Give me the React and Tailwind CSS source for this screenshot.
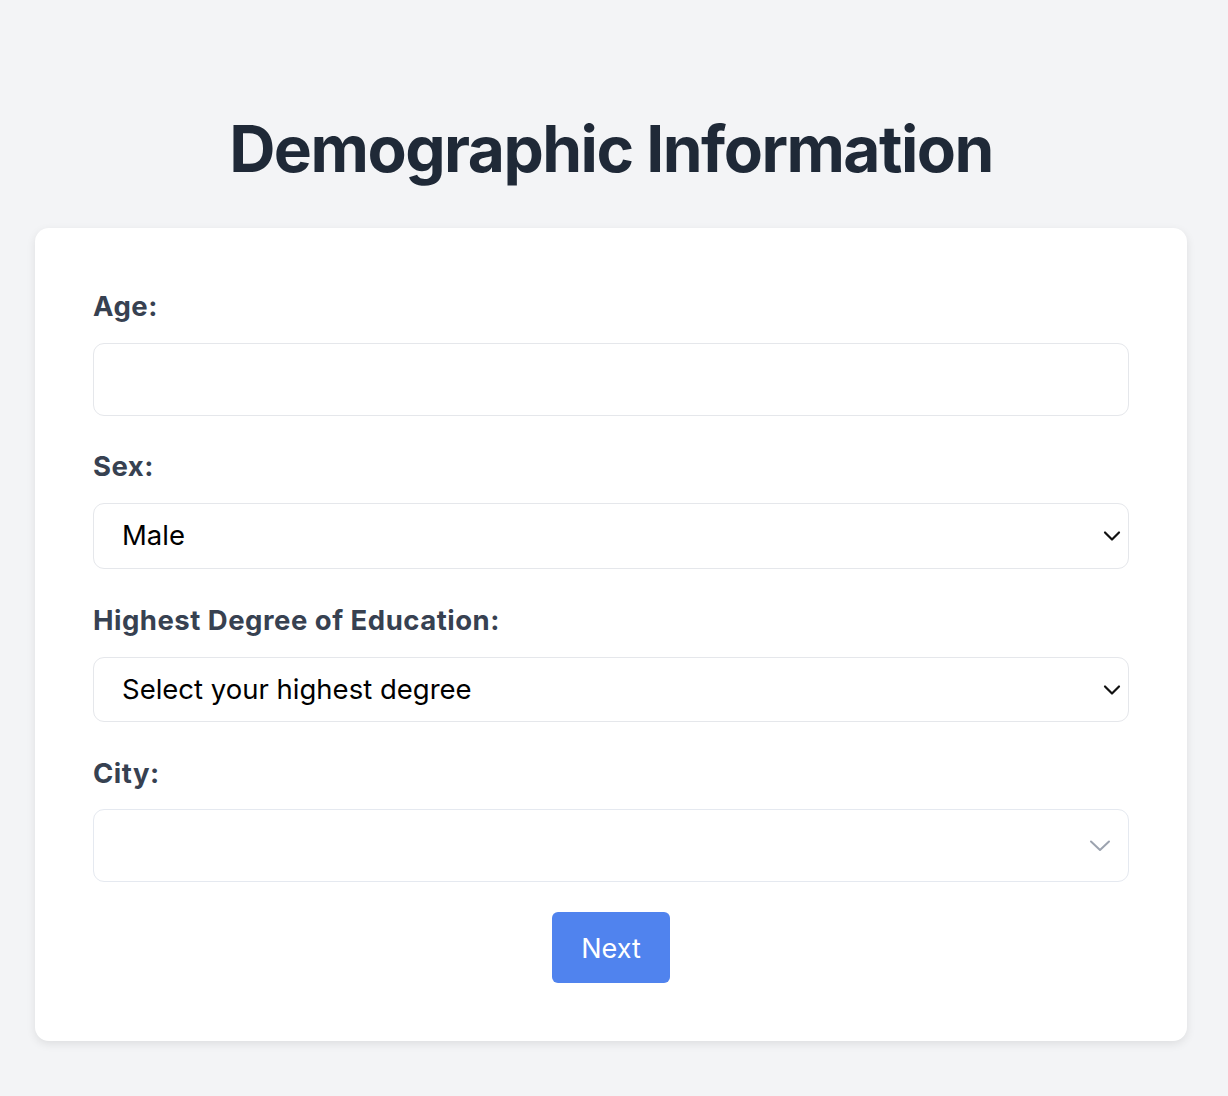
import { useState } from 'react';

// ===== chevrons =====
function SelectChevron() {
  return (
    <svg width="18" height="12" viewBox="0 0 18 12" fill="none" className="absolute right-[8px] top-1/2 -translate-y-1/2 pointer-events-none">
      <path d="M2 2.5 L9 9.5 L16 2.5" stroke="#111" strokeWidth="2.2" strokeLinecap="round" strokeLinejoin="round" />
    </svg>
  );
}

function CityChevron() {
  return (
    <svg width="22" height="14" viewBox="0 0 22 14" fill="none" className="absolute right-[18px] top-1/2 -translate-y-1/2 pointer-events-none">
      <path d="M2 2.5 L11 11 L20 2.5" stroke="#9ca3af" strokeWidth="2" strokeLinecap="round" strokeLinejoin="round" />
    </svg>
  );
}

export default function App() {
  const [age, setAge] = useState('');
  const [sex, setSex] = useState('Male');
  const [degree, setDegree] = useState('');
  const [city, setCity] = useState('');

  const labelCls = "block text-[27.5px] leading-[40px] font-bold text-[#374151] tracking-[0.5px]";
  const selectCls = "w-full appearance-none bg-white border border-[#e5e7eb] rounded-[11px] pl-[28px] pr-12 text-[27.5px] text-black outline-none";

  return (
    <div className="min-h-screen bg-[#f3f4f6] pt-[110px] pb-[55px]" style={{ fontFamily: 'Inter, "Noto Sans", sans-serif' }}>
      <div className="ml-[35px] w-[1152px]">
        {/* Header */}
        <h1 className="text-center text-[64px] leading-[78px] font-bold text-[#1f2937] tracking-[-1.5px] mb-[40px]">
          Demographic Information
        </h1>

        {/* Card */}
        <form onSubmit={(e) => e.preventDefault()} className="bg-white rounded-[14px] shadow-[0_3px_10px_rgba(0,0,0,0.09)] p-[58px] flex flex-col">
          <label className={`${labelCls} mb-[17px]`}>Age:</label>
          <input value={age} onChange={(e) => setAge(e.target.value)}
            className="w-full h-[73px] bg-white border border-[#e5e7eb] rounded-[11px] px-[28px] text-[27px] outline-none mb-[30px]" />

          <label className={`${labelCls} mb-[17px]`}>Sex:</label>
          <div className="relative mb-[31px]">
            <select value={sex} onChange={(e) => setSex(e.target.value)} className={`${selectCls} h-[66px]`}>
              <option>Male</option>
              <option>Female</option>
              <option>Other</option>
            </select>
            <SelectChevron />
          </div>

          <label className={`${labelCls} mb-[17px]`}>Highest Degree of Education:</label>
          <div className="relative mb-[31px]">
            <select value={degree} onChange={(e) => setDegree(e.target.value)} className={`${selectCls} h-[65px]`}>
              <option value="">Select your highest degree</option>
              <option>High School</option>
              <option>Bachelor's</option>
              <option>Master's</option>
              <option>Doctorate</option>
            </select>
            <SelectChevron />
          </div>

          <label className={`${labelCls} mb-[16px]`}>City:</label>
          <div className="relative">
            <input value={city} onChange={(e) => setCity(e.target.value)}
              className="w-full h-[73px] bg-white border border-[#e5e9f0] rounded-[11px] pl-[28px] pr-16 text-[27px] outline-none" />
            <CityChevron />
          </div>

          <div className="flex justify-center mt-[30px]">
            <button type="submit" className="w-[118px] h-[71px] pt-[3px] bg-[#5083ee] text-white text-[27px] rounded-[6px] hover:bg-[#3b6fe0]">
              Next
            </button>
          </div>
        </form>
      </div>
    </div>
  );
}
